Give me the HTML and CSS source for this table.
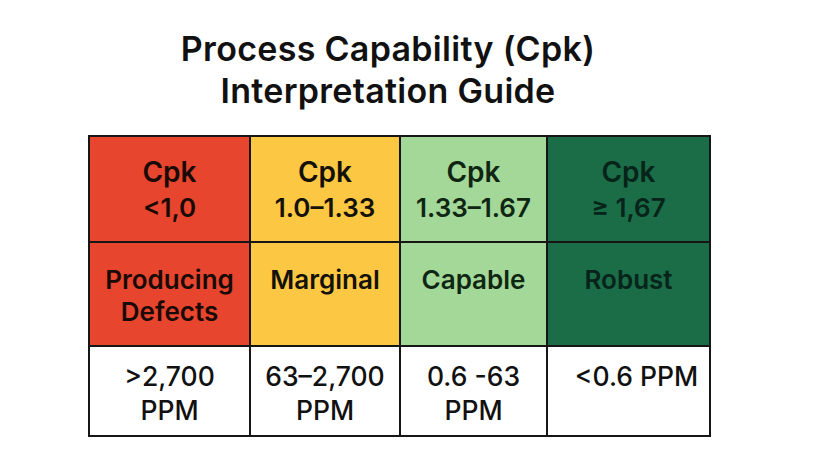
FILE: index.html
```html
<!DOCTYPE html>
<html>
<head>
<meta charset="utf-8">
<link rel="stylesheet" href="styles.css">
</head>
<body>
<div class="page">
  <h1 class="title">Process Capability (Cpk)<br>Interpretation Guide</h1>
  <div class="grid">
    <div class="cell head red"><span class="key">Cpk</span><span class="val">&lt;1,0</span></div>
    <div class="cell head yellow"><span class="key">Cpk</span><span class="val">1.0–1.33</span></div>
    <div class="cell head light"><span class="key">Cpk</span><span class="val">1.33–1.67</span></div>
    <div class="cell head dark"><span class="key">Cpk</span><span class="val">≥ 1,67</span></div>

    <div class="cell label red">Producing<br>Defects</div>
    <div class="cell label yellow">Marginal</div>
    <div class="cell label light">Capable</div>
    <div class="cell label dark">Robust</div>

    <div class="cell ppm">&gt;2,700<br>PPM</div>
    <div class="cell ppm">63–2,700<br>PPM</div>
    <div class="cell ppm">0.6 -63<br>PPM</div>
    <div class="cell ppm ppm-shift">&lt;0.6 PPM</div>
  </div>
</div>
</body>
</html>
```

FILE: styles.css
```css
* { box-sizing: border-box; }
html, body { margin: 0; padding: 0; background: #ffffff; }
body { font-family: Inter, "Liberation Sans", sans-serif; color: #111111; }
.page { width: 820px; height: 470px; padding-top: 28px; }
.title {
  margin: 0;
  padding-right: 44px;
  text-align: center;
  font-size: 34px;
  line-height: 42px;
  font-weight: 600;
  letter-spacing: 0.3px;
  color: #111111;
}
.grid {
  margin: 23px 0 0 88px;
  width: 623px;
  display: grid;
  grid-template-columns: 159px 148px 145px 161px;
  grid-template-rows: 104px 102px 88px;
  gap: 2px;
  padding: 2px;
  background: #161616;
}
.cell {
  display: flex;
  flex-direction: column;
  align-items: center;
  text-align: center;
}
.head {
  padding-top: 18px;
  font-weight: 600;
  line-height: 35px;
}
.head .key { font-size: 28px; }
.head .val { font-size: 26px; }
.label {
  padding-top: 21px;
  font-size: 26px;
  line-height: 32px;
  font-weight: 600;
}
.ppm {
  background: #ffffff;
  padding-top: 12px;
  font-size: 26.5px;
  line-height: 34px;
  font-weight: 500;
}
.ppm-shift { padding-left: 16px; }
.red { background: #e8452f; color: #1a0a06; }
.yellow { background: #fcc844; color: #141108; }
.light { background: #a4d899; color: #0f2612; }
.dark { background: #1a6d47; color: #07241a; }
```
